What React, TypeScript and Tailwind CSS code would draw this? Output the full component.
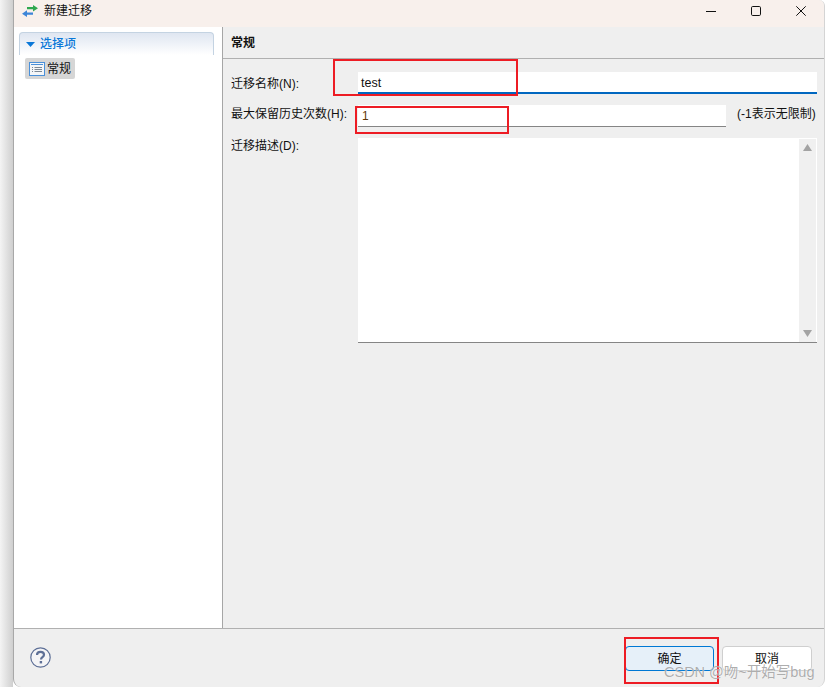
export default function App() {
  return (
    <div className="relative flex h-[687px] w-[828px] overflow-hidden bg-white font-['Liberation_Sans','Noto_Sans_CJK_SC',sans-serif] text-[12px] text-[#111]">
      {/* desktop shadow left of the window */}
      <div className="h-full w-[13px] bg-gradient-to-r from-[#f4f4f4] to-[#cfcfcf]" />

      <div className="flex h-full w-[812px] flex-col overflow-hidden rounded-bl-[8px] rounded-br-[8px] rounded-tr-[6px] border-x border-l-[#a8a8a8] border-r-[#d4d4d4] bg-[#efefef]">
        {/* title bar */}
        <div className="flex h-[27px] items-center bg-[#f8f0ec] pb-[5px] pl-[8px]">
          <svg width="16" height="12" viewBox="0 0 16 12">
            <path d="M5 2h6V0l5 3.200-5 3.300V4.300H5z" fill="#2fa84f" />
            <path d="M11 7.500H5V5.300L0 8.700 5 12V9.800h6z" fill="#3d85d8" />
          </svg>
          <span className="ml-[6px] text-[12px]">新建迁移</span>
          <div className="ml-auto flex items-center gap-[35px] pr-[18px]">
            <svg width="10" height="10" viewBox="0 0 10 10">
              <path d="M0 5.500h10" stroke="#111" strokeWidth="1" />
            </svg>
            <svg width="10" height="10" viewBox="0 0 10 10">
              <rect x="0.500" y="0.500" width="9" height="9" rx="1.200" fill="none" stroke="#111" strokeWidth="1" />
            </svg>
            <svg width="10" height="10" viewBox="0 0 10 10">
              <path d="M.3.300l9.400 9.400M9.700.300L.3 9.700" stroke="#111" strokeWidth="1" />
            </svg>
          </div>
        </div>

        <div className="flex min-h-0 flex-1">
          {/* sidebar */}
          <div className="w-[209px] shrink-0 border-r border-[#a6a6a6] bg-white pl-[5px] pr-[8px] pt-[5px]">
            <div className="flex h-[23px] items-center rounded-t-[4px] border-x border-t border-[#c4d3e2] bg-gradient-to-b from-[#dfe6f1] to-white pl-[6px]">
              <svg width="9" height="5" viewBox="0 0 9 5">
                <path d="M0 0h9L4.500 5z" fill="#0a78d8" />
              </svg>
              <span className="ml-[5px] text-[12px] font-medium text-[#0a78d8]">选择项</span>
            </div>
            <div className="ml-[6px] mt-[3px] flex h-[21px] w-[50px] items-center rounded-[2px] bg-[#d6d6d6] pl-[4px]">
              <svg width="16" height="14" viewBox="0 0 16 14">
                <rect x="0.500" y="0.500" width="15" height="13" fill="#f4f6f8" stroke="#4a90d9" />
                <path d="M2 2h12v1H2z" fill="#4a90d9" />
                <path d="M3 5h1v1H3zM3 7h1v1H3zM3 9h1v1H3zM5.500 5H13v1H5.500zM5.500 7H13v1H5.500zM5.500 9H13v1H5.500z" fill="#7d8894" />
              </svg>
              <span className="ml-[2px] text-[12px]">常规</span>
            </div>
          </div>

          {/* form panel */}
          <div className="flex min-w-0 flex-1 flex-col">
            <div className="flex h-[32px] items-center border-b border-[#b0b0b0] pl-[8px] text-[12px] font-bold">常规</div>
            <div className="flex flex-col gap-[11px] pl-[8px] pr-[7px] pt-[13px]">
              <div className="flex">
                <label className="w-[127px] shrink-0 pt-[3px]">迁移名称(N):</label>
                <div className="flex h-[22px] flex-1 items-center border-b-2 border-[#0067c0] bg-white pl-[3px] pt-[3px] text-[12.500px]">test</div>
              </div>
              <div className="flex">
                <label className="w-[127px] shrink-0">最大保留历史次数(H):</label>
                <div className="flex h-[22px] w-[368px] shrink-0 items-center border-b border-[#858585] bg-white pl-[4px] font-medium text-[#5f3806]">1</div>
                <span className="ml-[11px]">(-1表示无限制)</span>
              </div>
              <div className="flex">
                <label className="-mt-[1px] w-[127px] shrink-0">迁移描述(D):</label>
                <div className="flex h-[205px] flex-1 justify-end border-b border-[#858585] bg-white pt-[1px]">
                  <div className="mr-[1px] flex w-[17px] flex-col items-center justify-between bg-[#f0f0f0] pb-[5px] pt-[5px]">
                    <svg width="9" height="7" viewBox="0 0 9 7">
                      <path d="M4.500 0L9 7H0z" fill="#a3a3a3" />
                    </svg>
                    <svg width="9" height="7" viewBox="0 0 9 7">
                      <path d="M0 0h9L4.500 7z" fill="#a3a3a3" />
                    </svg>
                  </div>
                </div>
              </div>
            </div>
          </div>
        </div>

        {/* footer */}
        <div className="flex h-[59px] shrink-0 items-start border-t border-[#b0b0b0] pl-[16px] pr-[12px] pt-[17px]">
          <svg width="21" height="21" viewBox="0 0 21 21" className="mt-[1px]">
            <circle cx="10.500" cy="10.500" r="9.700" fill="#f4f4f6" stroke="#5d6f96" strokeWidth="1.200" />
            <path d="M7 8c0-2 1.500-3.200 3.500-3.200S14 6 14 7.800c0 2.400-3 2.400-3 4.700" fill="none" stroke="#5d6f96" strokeWidth="2.200" />
            <rect x="9.700" y="14" width="2.400" height="2.400" fill="#5d6f96" />
          </svg>
          <div className="ml-auto flex gap-[8px]">
            <button className="h-[25px] w-[89px] rounded-[4px] border border-[#0078d4] bg-[#e6f0f9] text-[12px]">确定</button>
            <button className="h-[25px] w-[90px] rounded-[4px] border border-[#cfcfcf] bg-white text-[12px]">取消</button>
          </div>
        </div>
      </div>

      {/* red annotation boxes drawn on the screenshot */}
      <div className="absolute left-[333px] top-[59px] h-[37px] w-[185px] border-2 border-[#ed1c24]" />
      <div className="absolute left-[355px] top-[106px] h-[28px] w-[154px] border-2 border-[#ed1c24]" />
      <div className="absolute left-[624px] top-[637px] h-[47px] w-[95px] border-2 border-[#ed1c24]" />

      {/* watermark */}
      <span className="absolute left-[664px] top-[663px] text-[14.500px] leading-[18px] text-[#8a8a8a]/70 [text-shadow:0_0_1px_white]">CSDN @吻~开始写bug</span>
    </div>
  );
}
